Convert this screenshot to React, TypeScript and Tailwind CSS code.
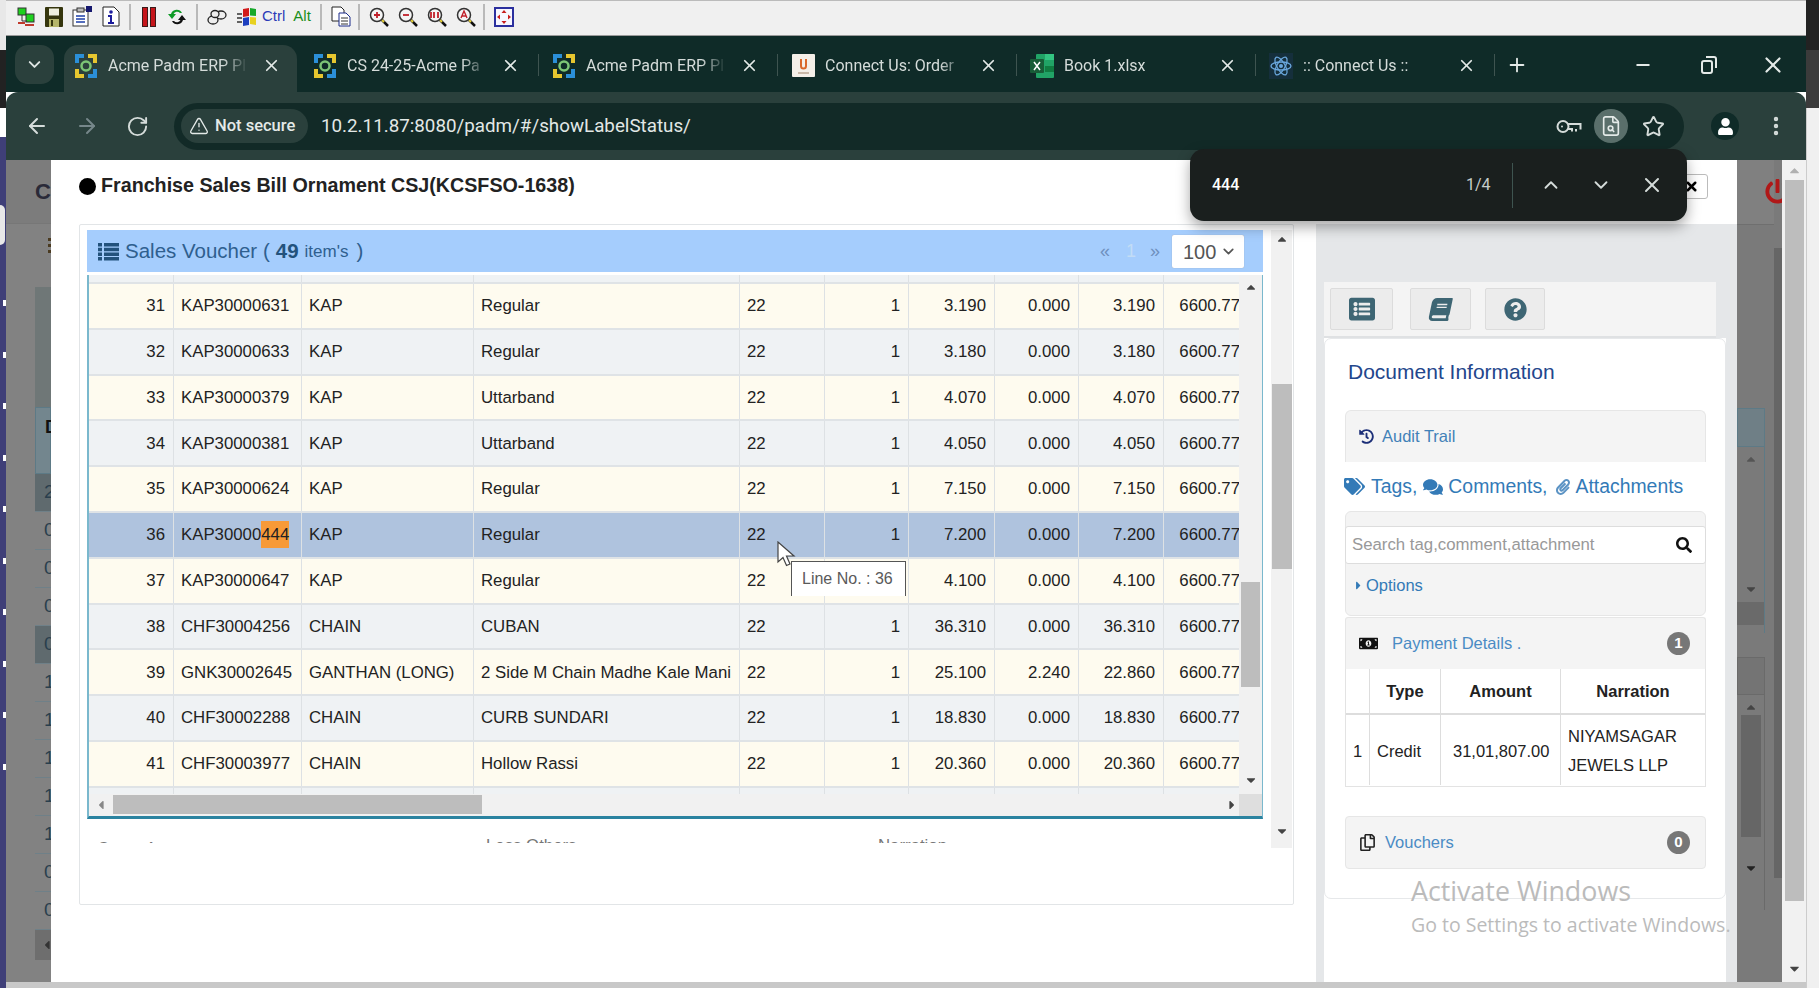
import { ReactNode } from "react";
import {
  ArrowLeft,
  ArrowRight,
  ChevronDown,
  ChevronUp,
  EllipsisVertical,
  FileSearch,
  Minus,
  Plus,
  RotateCw,
  Star,
  TriangleAlert,
  X,
} from "lucide-react";
import {
  FaBook,
  FaCaretDown,
  FaCaretLeft,
  FaCaretRight,
  FaCaretUp,
  FaComments,
  FaHistory,
  FaListAlt,
  FaMoneyBillAlt,
  FaPaperclip,
  FaPowerOff,
  FaQuestionCircle,
  FaRegCopy,
  FaSearch,
  FaTags,
  FaUser,
} from "react-icons/fa";

type Row = {
  no: number;
  code: string;
  group: string;
  name: string;
  gross: string;
  less?: string;
  net?: string;
};

const ROWS: Row[] = [
  { no: 31, code: "KAP30000631", group: "KAP", name: "Regular", gross: "3.190" },
  { no: 32, code: "KAP30000633", group: "KAP", name: "Regular", gross: "3.180" },
  { no: 33, code: "KAP30000379", group: "KAP", name: "Uttarband", gross: "4.070" },
  { no: 34, code: "KAP30000381", group: "KAP", name: "Uttarband", gross: "4.050" },
  { no: 35, code: "KAP30000624", group: "KAP", name: "Regular", gross: "7.150" },
  { no: 36, code: "KAP30000444", group: "KAP", name: "Regular", gross: "7.200" },
  { no: 37, code: "KAP30000647", group: "KAP", name: "Regular", gross: "4.100" },
  { no: 38, code: "CHF30004256", group: "CHAIN", name: "CUBAN", gross: "36.310" },
  { no: 39, code: "GNK30002645", group: "GANTHAN (LONG)", name: "2 Side M Chain Madhe Kale Mani", gross: "25.100", less: "2.240", net: "22.860" },
  { no: 40, code: "CHF30002288", group: "CHAIN", name: "CURB SUNDARI", gross: "18.830" },
  { no: 41, code: "CHF30003977", group: "CHAIN", name: "Hollow Rassi", gross: "20.360" },
];

const GRID = "grid grid-cols-[85px_128px_172px_266px_85px_84px_86px_84px_85px_76px]";

function AcmeIcon() {
  return (
    <svg width="22" height="24" viewBox="0 0 22 24">
      <path d="M0 0h9v4H4v5H0z" fill="#2b8fd8" />
      <path d="M13 0h9v9h-4V4h-5z" fill="#e6c62f" />
      <path d="M0 15h4v5h5v4H0z" fill="#e6c62f" />
      <path d="M18 15h4v9h-9v-4h5z" fill="#2b8fd8" />
      <circle cx="11" cy="12" r="4.5" fill="none" stroke="#7cc576" strokeWidth="2.5" />
    </svg>
  );
}

function ConnectIcon() {
  return (
    <svg width="23" height="23" viewBox="0 0 23 23">
      <rect width="23" height="23" rx="1" fill="#f4efe8" />
      <path d="M8 5v7a3.500 3.500 0 0 0 7 0V5h-2v7a1.500 1.500 0 0 1-3 0V5z" fill="#d9682b" />
      <rect x="6" y="18" width="11" height="2" fill="#c9b8a8" />
    </svg>
  );
}

function ExcelIcon() {
  return (
    <svg width="24" height="24" viewBox="0 0 24 24">
      <rect x="6" width="18" height="24" rx="1" fill="#21a366" />
      <rect x="15" width="9" height="6" fill="#33c481" />
      <rect x="15" y="12" width="9" height="6" fill="#107c41" />
      <rect y="5" width="14" height="14" rx="1" fill="#185c37" />
      <path d="M4 8l6 8M10 8l-6 8" stroke="#fff" strokeWidth="1.500" />
    </svg>
  );
}

function AtomIcon() {
  return (
    <svg width="24" height="26" viewBox="0 0 24 26">
      <rect width="24" height="26" fill="#152f3c" />
      <g fill="none" stroke="#6aa8dd" strokeWidth="1.300">
        <ellipse cx="12" cy="13" rx="10" ry="4" />
        <ellipse cx="12" cy="13" rx="10" ry="4" transform="rotate(60 12 13)" />
        <ellipse cx="12" cy="13" rx="10" ry="4" transform="rotate(120 12 13)" />
      </g>
      <circle cx="12" cy="13" r="2" fill="#6aa8dd" />
    </svg>
  );
}

const TABS: { title: string; icon: ReactNode; active?: boolean }[] = [
  { title: "Acme Padm ERP Pl", icon: <AcmeIcon />, active: true },
  { title: "CS 24-25-Acme Pa", icon: <AcmeIcon /> },
  { title: "Acme Padm ERP Pl", icon: <AcmeIcon /> },
  { title: "Connect Us: Order", icon: <ConnectIcon /> },
  { title: "Book 1.xlsx", icon: <ExcelIcon /> },
  { title: ":: Connect Us ::", icon: <AtomIcon /> },
];

function Sep({ ml }: { ml: string }) {
  return <div className={`h-[26px] w-[2px] bg-[#b9b9b9] ${ml}`} />;
}

function Magnifier({ children }: { children: ReactNode }) {
  return (
    <svg width="20" height="20" viewBox="0 0 20 20">
      <line x1="12" y1="12" x2="19" y2="19" stroke="#111" strokeWidth="2.500" />
      <line x1="12" y1="12" x2="15" y2="15" stroke="#e8d23a" strokeWidth="2" />
      <circle cx="8" cy="8" r="6.500" fill="#f4f4f4" stroke="#333" strokeWidth="1.500" />
      {children}
    </svg>
  );
}

function ToolStrip() {
  return (
    <div className="h-[36px] flex items-center pl-[11px] pb-[3px] bg-[#f0f0f0] border-t border-b border-t-[#bbbbbb] border-b-[#9a9a9a]">
      <svg width="18" height="20" viewBox="0 0 18 20">
        <rect x="1" y="1" width="8" height="7" fill="#1fd11f" stroke="#333" />
        <rect x="9" y="7" width="8" height="8" fill="#1fd11f" stroke="#333" />
        <path d="M1 16h7M8 18h9" stroke="#c0392b" strokeWidth="2" />
        <path d="M5 8v6h5" fill="none" stroke="#333" />
      </svg>
      <svg className="ml-[10px]" width="18" height="20" viewBox="0 0 18 20">
        <rect width="18" height="20" rx="1" fill="#36360e" />
        <rect x="4" y="1.500" width="10" height="7" fill="#f0f0e0" />
        <rect x="4" y="12" width="10" height="8" fill="#b5b56a" />
        <rect x="6" y="13" width="2" height="6" fill="#36360e" />
      </svg>
      <svg className="ml-[9px]" width="21" height="21" viewBox="0 0 21 21">
        <rect x="1" y="4" width="15" height="16" fill="#fff" stroke="#333" />
        <rect x="5" y="2" width="7" height="4" fill="#bbb" stroke="#333" />
        <path d="M4 10h9M4 13h9M4 16h9" stroke="#1d3fa8" strokeWidth="1.500" />
        <rect x="14" y="0" width="6" height="6" fill="#16186e" />
      </svg>
      <svg className="ml-[9px]" width="18" height="21" viewBox="0 0 18 21">
        <path d="M1 1h11l5 5v14H1z" fill="#fff" stroke="#222" />
        <circle cx="9" cy="6" r="1.800" fill="#1c1c9c" />
        <path d="M6 9h4v7h2v2H6v-2h2v-5H6z" fill="#1c1c9c" />
      </svg>
      <Sep ml="ml-[9px]" />
      <div className="ml-[12px] flex gap-[4px]">
        <div className="w-[4px] h-[18px] bg-[#c5141a] outline outline-1 outline-[#3a1a1a]" />
        <div className="w-[4px] h-[18px] bg-[#c5141a] outline outline-1 outline-[#3a1a1a]" />
      </div>
      <svg className="ml-[12px]" width="20" height="20" viewBox="0 0 20 20">
        <path d="M15 6A6 6 0 0 0 4 7H1l4 5 4-5H6.500A4 4 0 0 1 13 6z" fill="#0e9b26" />
        <path d="M5 14a6 6 0 0 0 11-1h3l-4-5-4 5h2.500A4 4 0 0 1 7 14z" fill="#111" />
      </svg>
      <Sep ml="ml-[9px]" />
      <svg className="ml-[9px]" width="20" height="16" viewBox="0 0 20 16">
        <g fill="#eee" stroke="#222" strokeWidth="1.300">
          <ellipse cx="6" cy="11" rx="5" ry="4" />
          <ellipse cx="14" cy="6" rx="5" ry="4" />
          <ellipse cx="8" cy="5" rx="4" ry="3.500" />
        </g>
      </svg>
      <svg className="ml-[10px]" width="20" height="20" viewBox="0 0 20 20">
        <path d="M6 2l6-1v8l-6 1z" fill="#d11a1a" />
        <path d="M13 1l6 1v7l-6-.500z" fill="#16a82a" />
        <path d="M6 11l6-1v8l-6 1z" fill="#1c3fbf" />
        <path d="M13 10l6 .500V18l-6-1z" fill="#e8d11f" />
        <path d="M0 7h5M0 11h5M0 15h5" stroke="#333" strokeWidth="1.500" />
      </svg>
      <span className="ml-[5px] text-[15px] text-[#2b3bb8] font-['Liberation_Sans',sans-serif]">Ctrl</span>
      <span className="ml-[8px] text-[15px] text-[#1a8f1a] font-['Liberation_Sans',sans-serif]">Alt</span>
      <Sep ml="ml-[9px]" />
      <svg className="ml-[9px]" width="20" height="21" viewBox="0 0 20 21">
        <path d="M1 1h9l3 3v11H1z" fill="#fff" stroke="#222" />
        <path d="M8 7h7l4 4v9H8z" fill="#fff" stroke="#1a2a8a" />
        <path d="M10 12h7M10 15h7M10 18h7" stroke="#333" />
      </svg>
      <Sep ml="ml-[7px]" />
      <div className="ml-[9px] flex gap-[9px]">
        <Magnifier>
          <path d="M5 8h6M8 5v6" stroke="#c0202a" strokeWidth="1.800" />
        </Magnifier>
        <Magnifier>
          <path d="M5 8h6" stroke="#c0202a" strokeWidth="1.800" />
        </Magnifier>
        <Magnifier>
          <path d="M4 5v6M7 5v6M11 5v6" stroke="#c0202a" strokeWidth="1.800" />
        </Magnifier>
        <Magnifier>
          <path d="M5 11l3-7 3 7M6 9h4" fill="none" stroke="#c0202a" strokeWidth="1.400" />
        </Magnifier>
      </div>
      <Sep ml="ml-[7px]" />
      <svg className="ml-[9px]" width="20" height="20" viewBox="0 0 20 20">
        <rect x="1" y="1" width="18" height="18" fill="#f7f7ff" stroke="#2b2f9e" strokeWidth="2" />
        <path d="M10 3l2.500 3h-5zM10 17l2.500-3h-5zM3 10l3-2.500v5zM17 10l-3-2.500v5z" fill="#c81e1e" />
      </svg>
    </div>
  );
}

function TabStrip() {
  return (
    <div className="h-[56px] flex bg-[#0f2b28] font-['Roboto',sans-serif]">
      <div className="ml-[9px] mt-[9px] w-[39px] h-[39px] rounded-[13px] bg-[#2a403c] flex items-center justify-center">
        <ChevronDown size={19} strokeWidth={2.4} className="text-[#dfe6e4]" />
      </div>
      <div className="ml-[7px] mt-[9px] flex">
        {TABS.map((tab, i) => (
          <div key={i} className="w-[239px] h-[47px] flex items-center pl-[3px]">
            <div
              className={`w-[233px] h-full flex items-center pb-[6px] pl-[10px] rounded-t-[14px] ${
                tab.active ? "bg-[#2a403c]" : ""
              }`}
            >
              <div className="w-[24px] h-[26px] flex items-center justify-center">{tab.icon}</div>
              <span className="ml-[10px] w-[140px] overflow-hidden whitespace-nowrap text-[16px] text-[#d5dcda] [mask-image:linear-gradient(to_right,black_82%,transparent)]">
                {tab.title}
              </span>
              <X size={19} strokeWidth={2.2} className="ml-[14px] text-[#e4eae8]" />
            </div>
            <div
              className={`ml-[2px] mb-[7px] w-px h-[22px] ${tab.active ? "bg-transparent" : "bg-[#3e5450]"}`}
            />
          </div>
        ))}
      </div>
      <Plus size={22} strokeWidth={2} className="ml-[11px] mt-[18px] text-[#e4eae8]" />
      <Minus size={20} strokeWidth={2.2} className="ml-[105px] mt-[19px] text-[#e4eae8]" />
      <svg className="ml-[48px] mt-[20px]" width="16" height="18" viewBox="0 0 16 18" fill="none" stroke="#e4eae8" strokeWidth="2">
        <rect x="1" y="5" width="10" height="12" rx="2" />
        <path d="M5 1h8a2 2 0 0 1 2 2v9" />
      </svg>
      <X size={26} strokeWidth={2} className="ml-[43px] mt-[16px] text-[#e4eae8]" />
    </div>
  );
}

function AddressBar() {
  return (
    <div className="h-[68px] flex items-center pl-[19px] bg-[#2a403c] rounded-t-[12px] font-['Roboto',sans-serif]">
      <ArrowLeft size={24} className="text-[#d5dcda]" />
      <ArrowRight size={24} className="ml-[26px] text-[#76878a]" />
      <RotateCw size={23} className="ml-[27px] text-[#d5dcda]" />
      <div className="ml-[25px] w-[1510px] h-[47px] rounded-full bg-[#122a27] flex items-center pl-[7px] pr-[19px]">
        <div className="w-[127px] h-[34px] rounded-full bg-[#2a403c] flex items-center pl-[8px] gap-[6px]">
          <TriangleAlert size={20} strokeWidth={1.6} className="text-[#e4eae8]" />
          <span className="text-[16.500px] font-medium text-[#e4eae8] whitespace-nowrap">Not secure</span>
        </div>
        <span className="ml-[13px] text-[18.800px] text-[#e2e8e6] whitespace-nowrap">10.2.11.87:8080/padm/#/showLabelStatus/</span>
        <svg className="ml-auto mr-[4px]" width="26" height="17" viewBox="0 0 26 17" fill="none" stroke="#d5dcda" strokeWidth="2">
          <circle cx="7" cy="8.500" r="5.500" />
          <circle cx="6" cy="8.500" r="1" fill="#d5dcda" stroke="none" />
          <path d="M12 6h12.500v5.500M12 11h4v2.500M20 11v2.500" />
        </svg>
        <div className="ml-[8px] w-[34px] h-[34px] rounded-full bg-[#5a6f6b] flex items-center justify-center">
          <FileSearch size={22} strokeWidth={1.8} className="text-[#e4eae8]" />
        </div>
        <Star size={23} strokeWidth={2} className="ml-[14px] text-[#d5dcda]" />
      </div>
      <div className="ml-[27px] w-[28px] h-[28px] rounded-full bg-[#0f2b28] flex items-center justify-center">
        <FaUser size={17} className="text-white" />
      </div>
      <EllipsisVertical size={24} strokeWidth={2.4} className="ml-[25px] text-[#d5dcda]" />
    </div>
  );
}

function DesktopEdge() {
  return (
    <div className="w-[6px] h-full flex flex-col">
      <div className="h-[50px] bg-[#e8e8e8]" />
      <div className="h-[58px] bg-[#222]" />
      <div className="h-[29px] bg-white" />
      <div className="flex-1 bg-[#3f3f78] overflow-hidden">
        <div className="mt-[68px] w-[5px] h-[40px] bg-[#e8e8e8] rounded-r-full" />
        <div className="mt-[55px] flex flex-col gap-[45.500px] items-end">
          {Array.from({ length: 10 }).map((_, i) => (
            <div key={i} className="w-[3px] h-[6px] bg-white" />
          ))}
        </div>
      </div>
    </div>
  );
}

function LeftDim() {
  const digits = ["2", "0", "0", "0", "0", "1", "1", "1", "1", "1", "0", "0"];
  return (
    <div className="w-[45px] h-full bg-[#828282] overflow-hidden font-['Liberation_Sans',sans-serif]">
      <div className="h-[64px] pl-[29px] pt-[19px] border-b border-[#777] bg-[#7c7c7c] text-[22px] font-bold leading-[26px] text-[#2a2a38]">Cl</div>
      <div className="h-[63px] pl-[42px] pt-[14px] text-[13px] font-bold text-[#4a3a20]">
        <div className="w-[4px] h-[16px] bg-[repeating-linear-gradient(#4a3a20_0_3px,transparent_3px_6px)]" />
      </div>
      <div className="ml-[29px] h-[120px] bg-[#6f7777]" />
      <div className="ml-[29px] h-[67px] bg-[#73868e] border border-[#5d7a86] pl-[9px] pt-[6px] text-[18px] font-bold text-[#111]">D</div>
      {digits.map((d, i) => (
        <div
          key={i}
          className={`ml-[29px] h-[38px] pl-[9px] flex items-center text-[19px] text-[#2a3f4d] border-b border-[#6f8088] ${
            i === 0 || i === 4 ? "bg-[#5f6a6e]" : "bg-[#828282]"
          }`}
        >
          {d}
        </div>
      ))}
      <div className="ml-[29px] h-[30px] pl-[8px] flex items-center bg-[#6e6e6e]">
        <FaCaretLeft size={14} className="text-[#333]" />
      </div>
    </div>
  );
}

function RightDim() {
  return (
    <div className="w-[45px] h-full flex bg-[#7a7a7a] overflow-hidden">
      <div className="w-[37px] h-full">
        <div className="h-[64px] bg-[#808080]" />
        <div className="h-[184px] border-t border-[#6f6f6f]" />
        <div className="w-[28px] h-[39px] bg-[#6f7f86] border border-[#5d7a86]" />
        <div className="w-[28px] h-[186px] border-r border-[#5d7a86] flex flex-col items-center pt-[5px]">
          <FaCaretUp size={14} className="text-[#555]" />
          <FaCaretDown size={14} className="mt-[116px] text-[#444]" />
          <div className="mt-[6px] w-full h-[23px] bg-[#6a6a6a]" />
        </div>
        <div className="mt-[24px] w-[28px] h-[38px] bg-[#747474] border border-[#6a6a6a]" />
        <div className="w-[28px] h-[215px] border-r border-[#6a6a6a] flex flex-col items-center pt-[5px]">
          <FaCaretUp size={14} className="text-[#444]" />
          <div className="mt-[1px] w-[20px] h-[122px] bg-[#666]" />
          <FaCaretDown size={14} className="mt-[24px] text-[#222]" />
        </div>
      </div>
      <div className="w-[8px] h-full">
        <div className="mt-[88px] h-[630px] bg-[#666]" />
      </div>
    </div>
  );
}

function PageScrollbar() {
  return (
    <div className="w-[24px] h-full bg-[#f1f1f1] flex flex-col items-center">
      <FaCaretUp size={15} className="mt-[3px] text-[#b0b0b0]" />
      <div className="mt-[2px] w-[19px] h-[721px] bg-[#bdbdbd]" />
      <FaCaretDown size={15} className="mt-[60px] text-[#444]" />
    </div>
  );
}

function VoucherRow({ row }: { row: Row }) {
  const selected = row.no === 36;
  const bg = selected ? "bg-[#afc3de]" : row.no % 2 === 1 ? "bg-[#fefbef]" : "bg-[#eff2f4]";
  const cell = "h-full flex items-center border-r border-[#dde1e4] overflow-hidden whitespace-nowrap";
  return (
    <div className={`${GRID} h-[45.8px] border-b-2 border-[#dfe3e6] text-[16.8px] text-[#222] ${bg}`}>
      <div className={`${cell} justify-end pr-[8px]`}>{row.no}</div>
      <div className={`${cell} pl-[7px]`}>
        {selected ? (
          <>
            KAP30000
            <span className="inline-block leading-[27px] bg-[#f79a37]">444</span>
          </>
        ) : (
          row.code
        )}
      </div>
      <div className={`${cell} pl-[7px]`}>{row.group}</div>
      <div className={`${cell} pl-[7px]`}>{row.name}</div>
      <div className={`${cell} pl-[7px]`}>22</div>
      <div className={`${cell} justify-end pr-[8px]`}>1</div>
      <div className={`${cell} justify-end pr-[8px]`}>{row.gross}</div>
      <div className={`${cell} justify-end pr-[8px]`}>{row.less ?? "0.000"}</div>
      <div className={`${cell} justify-end pr-[8px]`}>{row.net ?? row.gross}</div>
      <div className="h-full flex items-center justify-end overflow-hidden">6600.77</div>
    </div>
  );
}

function GridStub({ h }: { h: string }) {
  return (
    <div className={`${GRID} ${h} bg-[#eff2f4]`}>
      {Array.from({ length: 10 }).map((_, i) => (
        <div key={i} className={i < 9 ? "border-r border-[#dde1e4]" : ""} />
      ))}
    </div>
  );
}

function VoucherPanel() {
  return (
    <div className="w-[1215px] h-[681px] border border-[#e2e5e7] rounded-[2px] pl-[7px] pt-[5px] flex font-['Liberation_Sans',sans-serif]">
      <div className="w-[1176px] h-[613px] overflow-hidden">
        <div className="h-[42px] bg-[#a5cdfd] flex items-center pl-[11px] pt-[1px] text-[#2f5f8f]">
          <svg width="21" height="18" viewBox="0 0 21 18" fill="#23527c">
            <path d="M0 0h4v3.500H0zM6 0h15v3.500H6zM0 4.700h4v3.500H0zM6 4.700h15v3.500H6zM0 9.400h4v3.500H0zM6 9.400h15v3.500H6zM0 14.100h4v3.500H0zM6 14.100h15v3.500H6z" />
          </svg>
          <span className="ml-[6px] text-[20.500px] whitespace-nowrap">Sales Voucher (</span>
          <span className="ml-[6px] text-[20.500px] font-bold text-[#23527c]">49</span>
          <span className="ml-[6px] text-[17px]">item's</span>
          <span className="ml-[8px] text-[20.500px]">)</span>
          <span className="ml-auto text-[18px] text-[#6f90bd]">«</span>
          <span className="ml-[16px] text-[18px] text-[#c2dcf6]">1</span>
          <span className="ml-[14px] text-[18px] text-[#6f90bd]">»</span>
          <div className="ml-[12px] mr-[19px] w-[72px] h-[33px] bg-white rounded-[2px] shadow-[0_0_1px_#999] flex items-center pl-[11px] text-[20px] text-[#555]">
            100
            <ChevronDown size={17} strokeWidth={2.4} className="ml-[4px]" />
          </div>
        </div>
        <div className="mt-[3px] w-[1176px] h-[544px] flex flex-col border-l-2 border-r border-b-[3px] border-l-[#7ab8cd] border-r-[#7ab8cd] border-b-[#2b83a0]">
          <div className="flex h-[519px]">
            <div className="w-[1151px] overflow-hidden">
              <GridStub h="h-[9px] border-b-2 border-[#dfe3e6]" />
              {ROWS.map((row) => (
                <VoucherRow key={row.no} row={row} />
              ))}
              <GridStub h="h-[7px]" />
            </div>
            <div className="w-[23px] bg-[#f1f1f1] flex flex-col items-center">
              <FaCaretUp size={14} className="mt-[5px] text-[#444]" />
              <div className="mt-[288px] w-[19px] h-[105px] bg-[#bdbdbd]" />
              <FaCaretDown size={14} className="mt-[86px] text-[#444]" />
            </div>
          </div>
          <div className="flex h-[22px] bg-[#f1f1f1]">
            <div className="w-[24px] flex items-center justify-center">
              <FaCaretLeft size={14} className="text-[#888]" />
            </div>
            <div className="w-[369px] h-[19px] mt-px bg-[#bdbdbd]" />
            <div className="w-[758px] flex items-center justify-end">
              <FaCaretRight size={14} className="text-[#444]" />
            </div>
            <div className="w-[23px] bg-[#dedede]" />
          </div>
        </div>
        <div className="h-[25px] overflow-hidden text-[16.800px] text-[#777]">
          <div className="flex leading-[19px]">
            <span className="ml-[10px] w-[389px] mt-[20px]">Gross Amount</span>
            <span className="w-[392px] mt-[17px]">Less Others</span>
            <span className="mt-[17px]">Narration</span>
          </div>
        </div>
      </div>
      <div className="ml-[8px] w-[21px] h-[618px] bg-[#f1f1f1] flex flex-col items-center">
        <FaCaretUp size={14} className="mt-[2px] text-[#444]" />
        <div className="mt-[138px] w-[20px] h-[185px] bg-[#bdbdbd]" />
        <FaCaretDown size={14} className="mt-[255px] text-[#444]" />
      </div>
    </div>
  );
}

function Badge({ n }: { n: number }) {
  return (
    <span className="ml-auto mr-[15px] w-[23px] h-[23px] rounded-full bg-[#777] text-white text-[15px] font-bold flex items-center justify-center">
      {n}
    </span>
  );
}

function ToolButton({ w, ml, children }: { w: string; ml: string; children: ReactNode }) {
  return (
    <div className={`h-[42px] ${w} ${ml} bg-[#ececec] border border-[#dcdcdc] rounded-[2px] flex items-center justify-center text-[#3e6674]`}>
      {children}
    </div>
  );
}

function DocumentInfo() {
  const th = "flex items-center justify-center border-r border-[#ddd] font-bold text-[#222]";
  const td = "flex items-center border-r border-[#ddd] text-[#222] pt-[2px]";
  return (
    <div className="w-[421px] h-[758px] pt-[58px] bg-[#e5e7e9] pl-[8px] flex flex-col font-['Liberation_Sans',sans-serif] text-[16.800px]">
      <div className="w-[392px] h-[56px] bg-[#f4f4f4] flex items-start pt-[6px] pl-[6px] border-b-2 border-[#dfe1e3]">
        <ToolButton w="w-[63px]" ml="">
          <FaListAlt size={26} />
        </ToolButton>
        <ToolButton w="w-[61px]" ml="ml-[17px]">
          <FaBook size={23} className="-skew-x-12" />
        </ToolButton>
        <ToolButton w="w-[60px]" ml="ml-[14px]">
          <FaQuestionCircle size={23} />
        </ToolButton>
      </div>
      <div className="w-[402px] flex-1 bg-white">
        <div className="h-[561px] rounded-[7px] border border-[#e6e8ea] pl-[20px] flex flex-col">
          <div className="h-[71px] pl-[3px] pb-[6px] flex items-center text-[21px] text-[#23468c]">Document Information</div>
          <div className="w-[361px] h-[52px] bg-[#f4f4f4] border-x border-t border-[#e6e6e6] rounded-t-[6px] flex items-center pl-[13px] text-[16.500px] text-[#4281b8]">
            <FaHistory size={15} className="text-[#1c2f78]" />
            <span className="ml-[8px]">Audit Trail</span>
          </div>
          <div className="h-[49px] -ml-px flex items-center text-[19.400px] text-[#337ab7] whitespace-nowrap">
            <FaTags size={21} />
            <span className="ml-[6px]">Tags,</span>
            <FaComments size={20} className="ml-[6px]" />
            <span className="ml-[5px]">Comments,</span>
            <FaPaperclip size={16} className="ml-[7px] text-[#5b93c4]" />
            <span className="ml-[5px]">Attachments</span>
          </div>
          <div className="w-[361px] h-[105px] bg-[#f4f4f4] border border-[#e6e6e6] rounded-[6px] pt-[14px]">
            <div className="-mx-px h-[38px] bg-white border border-[#dddddd] rounded-[3px] flex items-center pl-[6px] pr-[13px] text-[#999]">
              Search tag,comment,attachment
              <FaSearch size={16} className="ml-auto text-[#111]" />
            </div>
            <div className="mt-[9px] pl-[6px] flex items-center text-[16.500px] text-[#337ab7]">
              <FaCaretRight size={13} />
              <span className="ml-[1px]">Options</span>
            </div>
          </div>
          <div className="mt-px w-[361px] h-[52px] bg-[#f4f4f4] border-x border-t border-[#e6e6e6] rounded-t-[3px] flex items-center pl-[13px] text-[16.500px] text-[#4a8bc4]">
            <FaMoneyBillAlt size={19} className="text-[#111]" />
            <span className="ml-[14px]">Payment Details .</span>
            <Badge n={1} />
          </div>
          <div className="w-[361px] h-[118px] border-x border-b border-[#e3e3e3] text-[16.500px]">
            <div className="grid grid-cols-[24px_71px_120px_1fr] h-[46px] border-b-2 border-[#ddd]">
              <div className={th} />
              <div className={th}>Type</div>
              <div className={th}>Amount</div>
              <div className={`${th} border-r-0`}>Narration</div>
            </div>
            <div className="grid grid-cols-[24px_71px_120px_1fr] h-[70px]">
              <div className={`${td} pl-[7px]`}>1</div>
              <div className={`${td} pl-[7px]`}>Credit</div>
              <div className={`${td} pl-[12px]`}>31,01,807.00</div>
              <div className={`${td} pl-[7px] border-r-0 leading-[29px]`}>
                NIYAMSAGAR
                <br />
                JEWELS LLP
              </div>
            </div>
          </div>
          <div className="mt-[29px] w-[361px] h-[53px] bg-[#f4f4f4] border border-[#e6e6e6] rounded-[4px] flex items-center pl-[13px] text-[16.500px] text-[#4a8bc4]">
            <FaRegCopy size={17} className="text-[#222]" />
            <span className="ml-[9px]">Vouchers</span>
            <Badge n={0} />
          </div>
        </div>
      </div>
    </div>
  );
}

function Modal() {
  return (
    <div className="w-[1686px] h-full bg-white flex flex-col">
      <div className="h-[64px] pl-[28px] pb-[12px] flex items-center font-['Liberation_Sans',sans-serif]">
        <span className="w-[17px] h-[17px] rounded-full bg-black" />
        <span className="ml-[5px] text-[19.700px] font-bold text-[#222] whitespace-nowrap">Franchise Sales Bill Ornament CSJ(KCSFSO-1638)</span>
      </div>
      <div className="flex pl-[28px]">
        <VoucherPanel />
        <div className="ml-[22px]">
          <DocumentInfo />
        </div>
      </div>
    </div>
  );
}

export default function App() {
  return (
    <div className="relative w-[1819px] h-[988px] overflow-hidden flex bg-white">
      <DesktopEdge />
      <div className="w-[1800px] h-full flex flex-col">
        <ToolStrip />
        <TabStrip />
        <AddressBar />
        <div className="h-[822px] flex overflow-hidden">
          <LeftDim />
          <Modal />
          <RightDim />
          <PageScrollbar />
        </div>
        <div className="flex-1 bg-[#c8c8c8]" />
      </div>
      <div className="w-[13px] h-full flex flex-col">
        <div className="h-[50px] bg-[#222]" />
        <div className="h-[58px] bg-[#3b3b3b]" />
        <div className="flex-1 bg-[#f0f0f0] border-l border-[#ccc]" />
      </div>

      {/* dialog close button sitting under the find bar */}
      <div className="absolute left-[1660px] top-[174px] w-[48px] h-[25px] bg-white border border-[#bbb] rounded-[3px] flex items-center justify-end pr-[8px] text-black">
        <X size={15} strokeWidth={4} />
      </div>
      <div className="absolute left-[1765px] top-[179px] w-[17px] overflow-hidden text-[#b01818]">
        <FaPowerOff size={25} />
      </div>

      {/* find in page */}
      <div className="absolute left-[1190px] top-[149px] w-[497px] h-[72px] rounded-[14px] bg-[#1a1f1e] shadow-[0_6px_14px_rgba(0,0,0,0.35)] flex items-center pl-[22px] font-['Roboto',sans-serif]">
        <span className="w-[254px] text-[16px] font-medium text-white">444</span>
        <span className="w-[46px] text-[16px] text-[#c6cdcb]">1/4</span>
        <div className="w-px h-[45px] bg-[#3e5450]" />
        <ChevronUp size={22} strokeWidth={2} className="ml-[27px] text-[#d5dcda]" />
        <ChevronDown size={22} strokeWidth={2} className="ml-[28px] text-[#d5dcda]" />
        <X size={24} strokeWidth={2} className="ml-[28px] text-[#d5dcda]" />
      </div>

      {/* row tooltip and mouse pointer */}
      <div className="absolute left-[791px] top-[561px] w-[115px] h-[35px] bg-white border-x border-t border-[#555] flex items-center pl-[10px] font-['Liberation_Sans',sans-serif] text-[16px] text-[#5a5a5a]">
        Line No. : 36
      </div>
      <svg className="absolute left-[777px] top-[541px]" width="19" height="27" viewBox="0 0 19 27">
        <path d="M1 1v20l5-4.500 3.500 8 3.500-1.500-3.500-8H17z" fill="#fff" stroke="#444" strokeWidth="1.200" />
      </svg>

      {/* windows watermark */}
      <div className="absolute left-[1411px] top-[873px] font-['Open_Sans',sans-serif] text-[#bbbbbb] whitespace-nowrap">
        <div className="text-[26.800px] leading-[36px]">Activate Windows</div>
        <div className="mt-[2px] text-[19.500px] leading-[28px]">Go to Settings to activate Windows.</div>
      </div>
    </div>
  );
}
